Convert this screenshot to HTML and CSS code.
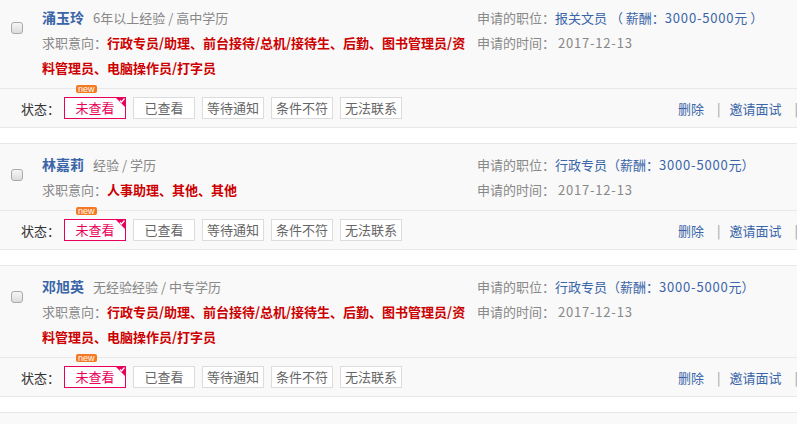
FILE: index.html
```html
<!DOCTYPE html>
<html lang="zh-CN">
<head>
    <meta charset="UTF-8">
    <meta name="viewport" content="width=device-width, initial-scale=1.0">
    <title>简历管理</title>
    <link rel="stylesheet" href="styles.css">
</head>
<body>
<div class="list">

    <div class="resume">
        <div class="resume-main">
            <span class="check"></span>
            <div class="info">
                <p><a class="name" href="#">涌玉玲</a><span class="meta">6年以上经验 / 高中学历</span></p>
                <p>求职意向：<b class="intent">行政专员/助理、前台接待/总机/接待生、后勤、图书管理员/资料管理员、电脑操作员/打字员</b></p>
            </div>
            <div class="apply">
                <p>申请的职位：<span class="job">报关文员 （ 薪酬：<span class="num">3000-5000</span>元 ）</span></p>
                <p>申请的时间： <span class="num">2017-12-13</span></p>
            </div>
        </div>
        <div class="resume-status">
            <span class="label">状态：</span>
            <span class="state state-new">未查看<i class="badge">new</i><svg class="tick" width="11" height="11" viewBox="0 0 11 11"><polygon points="0,0 11,0 11,11" fill="#e8005a"/><polyline points="5,3.5 6.5,5 9.5,1.5" fill="none" stroke="#fff" stroke-width="1.2"/></svg></span>
            <span class="state">已查看</span>
            <span class="state">等待通知</span>
            <span class="state">条件不符</span>
            <span class="state">无法联系</span>
            <div class="actions">
                <a href="#">删除</a><span class="sep">|</span><a href="#">邀请面试</a><span class="sep">|</span>
            </div>
        </div>
    </div>

    <div class="resume">
        <div class="resume-main">
            <span class="check"></span>
            <div class="info">
                <p><a class="name" href="#">林嘉莉</a><span class="meta">经验 / 学历</span></p>
                <p>求职意向：<b class="intent">人事助理、其他、其他</b></p>
            </div>
            <div class="apply">
                <p>申请的职位：<span class="job">行政专员（薪酬：<span class="num">3000-5000</span>元）</span></p>
                <p>申请的时间： <span class="num">2017-12-13</span></p>
            </div>
        </div>
        <div class="resume-status">
            <span class="label">状态：</span>
            <span class="state state-new">未查看<i class="badge">new</i><svg class="tick" width="11" height="11" viewBox="0 0 11 11"><polygon points="0,0 11,0 11,11" fill="#e8005a"/><polyline points="5,3.5 6.5,5 9.5,1.5" fill="none" stroke="#fff" stroke-width="1.2"/></svg></span>
            <span class="state">已查看</span>
            <span class="state">等待通知</span>
            <span class="state">条件不符</span>
            <span class="state">无法联系</span>
            <div class="actions">
                <a href="#">删除</a><span class="sep">|</span><a href="#">邀请面试</a><span class="sep">|</span>
            </div>
        </div>
    </div>

    <div class="resume">
        <div class="resume-main">
            <span class="check"></span>
            <div class="info">
                <p><a class="name" href="#">邓旭英</a><span class="meta">无经验经验 / 中专学历</span></p>
                <p>求职意向：<b class="intent">行政专员/助理、前台接待/总机/接待生、后勤、图书管理员/资料管理员、电脑操作员/打字员</b></p>
            </div>
            <div class="apply">
                <p>申请的职位：<span class="job">行政专员（薪酬：<span class="num">3000-5000</span>元）</span></p>
                <p>申请的时间： <span class="num">2017-12-13</span></p>
            </div>
        </div>
        <div class="resume-status">
            <span class="label">状态：</span>
            <span class="state state-new">未查看<i class="badge">new</i><svg class="tick" width="11" height="11" viewBox="0 0 11 11"><polygon points="0,0 11,0 11,11" fill="#e8005a"/><polyline points="5,3.5 6.5,5 9.5,1.5" fill="none" stroke="#fff" stroke-width="1.2"/></svg></span>
            <span class="state">已查看</span>
            <span class="state">等待通知</span>
            <span class="state">条件不符</span>
            <span class="state">无法联系</span>
            <div class="actions">
                <a href="#">删除</a><span class="sep">|</span><a href="#">邀请面试</a><span class="sep">|</span>
            </div>
        </div>
    </div>

    <!-- next row, only its top edge shows -->
    <div class="resume">
        <div class="resume-main">
            <span class="check"></span>
            <div class="info"></div>
            <div class="apply"></div>
        </div>
    </div>

</div>
</body>
</html>
```

FILE: styles.css
```css
body {
    margin: 0;
    overflow: hidden;
    background-color: #fff;
    font-family: "Noto Sans CJK SC", sans-serif;
    font-size: 13px;
    color: #888;
}
p {
    margin: 0;
}
a {
    text-decoration: none;
    color: #3a65a8;
}
.list {
    width: 830px;
    margin-top: -4px;
}
.resume {
    margin-bottom: 15px;
    background-color: #f9f9f9;
    border-top: 1px solid #e8e8e8;
    border-bottom: 1px solid #e8e8e8;
}
.resume-main {
    display: grid;
    grid-template-columns: 42px 435px 1fr;
    padding: 8px 0;
    line-height: 25px;
}
.check {
    width: 12px;
    height: 12px;
    margin: 17px 0 0 11px;
    box-sizing: border-box;
    border: 1px solid #a9a9a9;
    border-radius: 3px;
    background: linear-gradient(#f6f6f6, #dcdcdc);
}
.name {
    font-size: 14px;
    font-weight: bold;
}
.meta {
    margin-left: 9px;
}
.intent {
    color: #cc0000;
}
.job {
    color: #3a65a8;
}
.num {
    letter-spacing: 0.8px;
}
.resume-status {
    display: flex;
    align-items: center;
    height: 38px;
    padding-left: 21px;
    border-top: 1px solid #e8e8e8;
}
.label {
    color: #333;
    margin-right: 4px;
}
.state {
    position: relative;
    width: 62px;
    height: 22px;
    margin-right: 7px;
    box-sizing: border-box;
    border: 1px solid #dcdcdc;
    background-color: #fff;
    color: #666;
    line-height: 20px;
    text-align: center;
}
.state-new {
    border-color: #e8005a;
    color: #e8005a;
}
.badge {
    position: absolute;
    top: -13px;
    left: 11px;
    height: 8px;
    padding: 0 2px;
    border-radius: 2px;
    background-color: #f47920;
    color: #fff;
    font-family: "Liberation Sans", sans-serif;
    font-size: 9px;
    font-style: normal;
    line-height: 8px;
}
.tick {
    position: absolute;
    top: -1px;
    right: -1px;
}
.actions {
    display: flex;
    align-items: center;
    margin-left: auto;
    padding-right: 23px;
}
.sep {
    margin: 0 9px 0 13px;
    color: #999;
}
```
